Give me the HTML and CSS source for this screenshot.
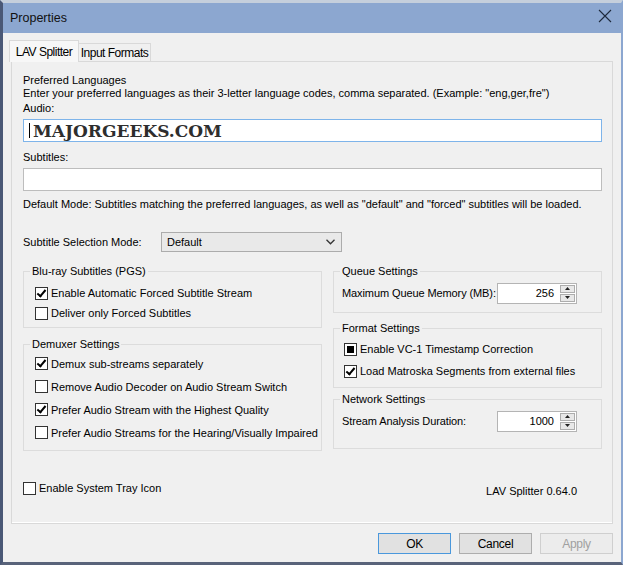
FILE: index.html
```html
<!DOCTYPE html>
<html lang="en">
<head>
    <meta charset="UTF-8">
    <title>Properties</title>
    <link rel="stylesheet" href="styles.css">
</head>
<body>
    <div class="window">
        <!-- Title bar -->
        <div class="titlebar">
            <div class="title">Properties</div>
            <svg class="close" width="14" height="14" viewBox="0 0 14 14">
                <path d="M1 1 L13 13 M13 1 L1 13" stroke="#1e2a3c" stroke-width="1.1" fill="none"/>
            </svg>
        </div>

        <div class="body">
            <div class="tabs">
                <div class="tab active">LAV Splitter</div>
                <div class="tab">Input Formats</div>
            </div>

            <div class="panel">
                <div class="line">Preferred Languages</div>
                <div class="line">Enter your preferred languages as their 3-letter language codes, comma separated. (Example: "eng,ger,fre")</div>
                <div class="line label-audio">Audio:</div>
                <div class="textbox focused">
                    <span class="caret"></span>
                    <span class="watermark">MAJORGEEKS.COM</span>
                </div>
                <div class="line label-subs">Subtitles:</div>
                <div class="textbox"></div>
                <div class="line note">Default Mode: Subtitles matching the preferred languages, as well as "default" and "forced" subtitles will be loaded.</div>

                <div class="mode-row">
                    <div class="mode-label">Subtitle Selection Mode:</div>
                    <div class="combo">
                        <span>Default</span>
                        <svg width="9" height="6" viewBox="0 0 9 6">
                            <path d="M0.5 0.8 L4.5 4.8 L8.5 0.8" stroke="#333" stroke-width="1.3" fill="none"/>
                        </svg>
                    </div>
                </div>

                <div class="columns">
                    <div class="col-left">
                        <fieldset class="group group-bluray">
                            <legend>Blu-ray Subtitles (PGS)</legend>
                            <div class="check-row"><span class="box checked"></span>Enable Automatic Forced Subtitle Stream</div>
                            <div class="check-row"><span class="box"></span>Deliver only Forced Subtitles</div>
                        </fieldset>
                        <fieldset class="group group-demux">
                            <legend>Demuxer Settings</legend>
                            <div class="check-row tall"><span class="box checked"></span>Demux sub-streams separately</div>
                            <div class="check-row tall"><span class="box"></span>Remove Audio Decoder on Audio Stream Switch</div>
                            <div class="check-row tall"><span class="box checked"></span>Prefer Audio Stream with the Highest Quality</div>
                            <div class="check-row tall"><span class="box"></span>Prefer Audio Streams for the Hearing/Visually Impaired</div>
                        </fieldset>
                    </div>
                    <div class="col-right">
                        <fieldset class="group group-queue">
                            <legend>Queue Settings</legend>
                            <div class="spin-row">
                                <span>Maximum Queue Memory (MB):</span>
                                <div class="spin">
                                    <span class="spin-value">256</span>
                                    <div class="spin-btns">
                                        <div class="spin-btn"><svg width="5" height="3" viewBox="0 0 5 3"><path d="M2.5 0 L5 3 L0 3 Z" fill="#222"/></svg></div>
                                        <div class="spin-btn"><svg width="5" height="3" viewBox="0 0 5 3"><path d="M0 0 L5 0 L2.5 3 Z" fill="#222"/></svg></div>
                                    </div>
                                </div>
                            </div>
                        </fieldset>
                        <fieldset class="group group-format">
                            <legend>Format Settings</legend>
                            <div class="check-row wide"><span class="box mixed"></span>Enable VC-1 Timestamp Correction</div>
                            <div class="check-row wide"><span class="box checked"></span>Load Matroska Segments from external files</div>
                        </fieldset>
                        <fieldset class="group group-network">
                            <legend>Network Settings</legend>
                            <div class="spin-row">
                                <span>Stream Analysis Duration:</span>
                                <div class="spin">
                                    <span class="spin-value">1000</span>
                                    <div class="spin-btns">
                                        <div class="spin-btn"><svg width="5" height="3" viewBox="0 0 5 3"><path d="M2.5 0 L5 3 L0 3 Z" fill="#222"/></svg></div>
                                        <div class="spin-btn"><svg width="5" height="3" viewBox="0 0 5 3"><path d="M0 0 L5 0 L2.5 3 Z" fill="#222"/></svg></div>
                                    </div>
                                </div>
                            </div>
                        </fieldset>
                    </div>
                </div>

                <div class="panel-footer">
                    <div class="check-row tray"><span class="box"></span>Enable System Tray Icon</div>
                    <div class="version">LAV Splitter 0.64.0</div>
                </div>
            </div>

            <div class="buttons">
                <button class="btn default">OK</button>
                <button class="btn">Cancel</button>
                <button class="btn disabled">Apply</button>
            </div>
        </div>
    </div>
</body>
</html>
```

FILE: styles.css
```css
:root {
    --face: #f0f0f0;
    --title: #8ca7d0;
    --group-border: #dcdcdc;
    --text: #000000;
}

body {
    margin: 0;
    background: var(--face);
    font-family: 'Liberation Sans', Arial, sans-serif;
    font-size: 11px;
    color: var(--text);
}

/* Window frame */
.window {
    box-sizing: border-box;
    width: 623px;
    height: 565px;
    border-style: solid;
    border-width: 3px 2px 3px 3px;
    border-color: #c5cfdc #8ca7d0 #59637a #4a5876;
    background: var(--face);
}

.titlebar {
    height: 30px;
    background: var(--title);
    display: flex;
    align-items: center;
    justify-content: space-between;
    padding: 0 9px 0 7px;
}

.title {
    font-size: 12.5px;
    color: #111;
    margin-top: -1px;
}

.close {
    margin-top: -5px;
}

.body {
    padding: 7px 8px 0 6px;
}

/* Tabs */
.tabs {
    display: flex;
    align-items: flex-end;
    height: 21px;
}

.tab {
    box-sizing: border-box;
    height: 18px;
    width: 72px;
    border: 1px solid #d9d9d9;
    border-bottom: none;
    border-left: none;
    display: flex;
    align-items: center;
    justify-content: center;
    font-size: 12px;
    letter-spacing: -0.5px;
    background: #f0f0f0;
}

.tab.active {
    height: 22px;
    width: 70px;
    border-left: 1px solid #d9d9d9;
    background: #f7f7f7;
    position: relative;
    z-index: 1;
    margin-bottom: -1px;
}

.panel {
    box-sizing: border-box;
    margin-left: 2px;
    height: 463px;
    border: 1px solid #d9d9d9;
    box-shadow: inset 0 -1px 0 #ffffff;
    padding: 12px 9px 0 11px;
}

.line {
    line-height: 13px;
    white-space: nowrap;
}

.label-audio {
    margin-top: 2px;
}

.label-subs {
    margin-top: 9px;
}

.note {
    margin-top: 7px;
}

/* Text boxes */
.textbox {
    box-sizing: border-box;
    height: 23px;
    margin-top: 4px;
    width: 579px;
    background: #ffffff;
    border: 1px solid #bdbdbd;
    display: flex;
    align-items: center;
    padding-left: 5px;
}

.textbox.focused {
    border-color: #7eb4ea;
}

.caret {
    width: 1px;
    height: 15px;
    background: #000;
    margin-right: 3px;
}

.watermark {
    font-family: 'DejaVu Serif', serif;
    font-weight: 900;
    font-size: 17px;
    color: #2e2e2e;
    letter-spacing: 0;
    line-height: 18px;
}

/* Combo */
.mode-row {
    display: flex;
    align-items: center;
    margin-top: 21px;
}

.mode-label {
    width: 138px;
}

.combo {
    box-sizing: border-box;
    width: 181px;
    height: 20px;
    border: 1px solid #acacac;
    background: #e9e9e9;
    display: flex;
    align-items: center;
    justify-content: space-between;
    padding: 0 6px 0 5px;
}

/* Group boxes */
.columns {
    display: flex;
    gap: 11px;
    margin-top: 13px;
}

.col-left {
    width: 299px;
}

.col-right {
    width: 269px;
}

.group {
    margin: 0;
    border: 1px solid var(--group-border);
    padding: 0;
    min-width: 0;
}

.group legend {
    padding: 0 2px;
    line-height: 13px;
}

.group-bluray {
    padding: 5px 0 4px 11px;
}

.group-demux {
    margin-top: 10px;
    padding: 1px 0 6px 11px;
}

.group-bluray legend,
.group-demux legend {
    margin-left: -5px;
}

.group-queue {
    padding: 4px 24px 8px 8px;
}

.group-format {
    margin-top: 9px;
    padding: 3px 0 5px 10px;
}

.group-network {
    margin-top: 5px;
    padding: 4px 24px 16px 8px;
}

.group-queue legend,
.group-network legend {
    margin-left: -2px;
}

.group-format legend {
    margin-left: -4px;
}

.check-row {
    display: flex;
    align-items: center;
    height: 20px;
    white-space: nowrap;
}

.check-row.tall {
    height: 23px;
}

.check-row.wide {
    height: 22px;
}

.box {
    box-sizing: border-box;
    width: 13px;
    height: 13px;
    border: 1px solid #333333;
    background: #ffffff;
    margin-right: 3px;
    flex-shrink: 0;
    position: relative;
}

.box.checked::after {
    content: "";
    position: absolute;
    left: 3px;
    top: 0px;
    width: 3px;
    height: 7px;
    border: solid #000;
    border-width: 0 2px 2px 0;
    transform: rotate(40deg);
}

.box.mixed::after {
    content: "";
    position: absolute;
    left: 2px;
    top: 2px;
    width: 7px;
    height: 7px;
    background: #000;
}

/* Spin boxes */
.spin-row {
    display: flex;
    align-items: center;
    justify-content: space-between;
    height: 22px;
    white-space: nowrap;
    letter-spacing: -0.1px;
}

.spin {
    box-sizing: border-box;
    width: 80px;
    height: 21px;
    border: 1px solid #b4b4b4;
    background: #ffffff;
    display: flex;
    align-items: center;
    justify-content: flex-end;
    padding-right: 1px;
    letter-spacing: 0;
}

.spin-value {
    margin-right: 6px;
}

.spin-btns {
    display: flex;
    flex-direction: column;
    gap: 1px;
}

.spin-btn {
    box-sizing: border-box;
    width: 15px;
    height: 8px;
    border: 1px solid #adadad;
    background: #e8e8e8;
    display: flex;
    align-items: center;
    justify-content: center;
}

/* Footer inside the panel */
.panel-footer {
    display: flex;
    align-items: center;
    justify-content: space-between;
    margin-top: 27px;
    padding-right: 26px;
}

.version {
    margin-top: 5px;
}

/* Dialog buttons */
.buttons {
    display: flex;
    justify-content: flex-end;
    gap: 8px;
    margin-top: 9px;
}

.btn {
    box-sizing: border-box;
    width: 73px;
    height: 21px;
    font-family: 'Liberation Sans', Arial, sans-serif;
    font-size: 12px;
    letter-spacing: -0.3px;
    background: #e1e1e1;
    border: 1px solid #adadad;
    padding: 0;
    color: #000;
}

.btn.default {
    border-color: #4a98dc;
}

.btn.disabled {
    background: #ececec;
    border-color: #cfcfcf;
    color: #a0a0a0;
}
```
